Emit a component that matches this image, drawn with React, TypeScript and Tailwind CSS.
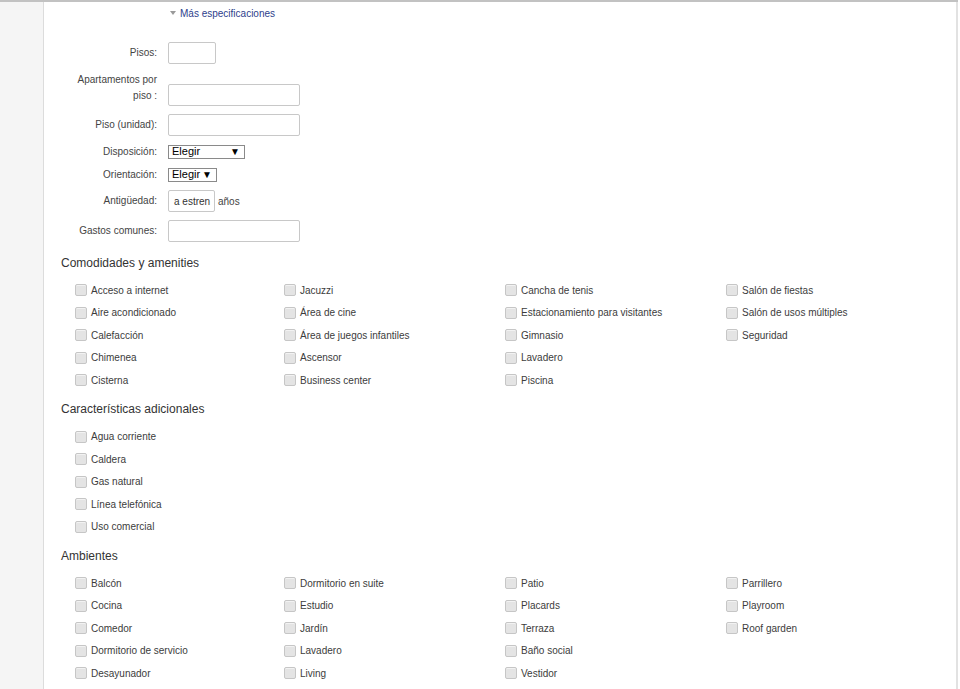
const amenities: string[][] = [
  ["Acceso a internet", "Aire acondicionado", "Calefacción", "Chimenea", "Cisterna"],
  ["Jacuzzi", "Área de cine", "Área de juegos infantiles", "Ascensor", "Business center"],
  ["Cancha de tenis", "Estacionamiento para visitantes", "Gimnasio", "Lavadero", "Piscina"],
  ["Salón de fiestas", "Salón de usos múltiples", "Seguridad"],
]

const extras: string[][] = [
  ["Agua corriente", "Caldera", "Gas natural", "Línea telefónica", "Uso comercial"],
]

const rooms: string[][] = [
  ["Balcón", "Cocina", "Comedor", "Dormitorio de servicio", "Desayunador"],
  ["Dormitorio en suite", "Estudio", "Jardín", "Lavadero", "Living"],
  ["Patio", "Placards", "Terraza", "Baño social", "Vestidor"],
  ["Parrillero", "Playroom", "Roof garden"],
]

function Check({ label }: { label: string }) {
  return (
    <label className="flex h-[22.5px] items-center gap-[4px] text-[10px] text-[#3c3c3c]">
      <span className="h-[12px] w-[12px] shrink-0 rounded-[2px] border border-[#c6c6c6] bg-[#e4e4e4] shadow-[inset_0_1px_0_#f2f2f2]" />
      <span>{label}</span>
    </label>
  )
}

function CheckGrid({ cols }: { cols: string[][] }) {
  return (
    <div className="ml-[14px] grid grid-cols-[209px_221px_221px_1fr]">
      {cols.map((col, i) => (
        <div key={i} className="flex flex-col">
          {col.map((item) => (
            <Check key={item} label={item} />
          ))}
        </div>
      ))}
    </div>
  )
}

function Row({ label, children, end, h }: { label: string; children: React.ReactNode; end?: boolean; h?: string }) {
  return (
    <div className={`flex gap-[11px] ${end ? "items-end" : "items-center"} ${h ?? ""}`}>
      <div className={`w-[82px] text-right text-[10px] leading-[16px] text-[#444] ${end ? "pb-[2px]" : ""}`}>
        {label}
      </div>
      {children}
    </div>
  )
}

function Field({ w, value }: { w: string; value?: string }) {
  return (
    <div className={`flex h-[22px] items-center overflow-hidden whitespace-nowrap rounded-[2px] border border-[#c8c8c8] bg-white px-[5px] text-[10px] text-[#333] ${w}`}>
      {value}
    </div>
  )
}

function Select({ w }: { w: string }) {
  return (
    <div className={`flex h-[14px] items-center justify-between border border-[#8a8a8a] bg-white pl-[3px] pr-[4px] text-[11px] leading-none text-black ${w}`}>
      <span>Elegir</span>
      <span className="text-[10px]">▼</span>
    </div>
  )
}

function App() {
  return (
    <div className="h-[689px] w-full overflow-hidden bg-white font-['Liberation_Sans',Arial,sans-serif]">
      <div className="flex h-full w-[958px] border-t-2 border-[#c2c2c2]">
        <div className="w-[44px] shrink-0 border-r border-[#dcdcdc] bg-[#f5f5f5]" />
        <div className="flex-1 border-r-2 border-[#e2e2e2] px-[17px]">
          <div className="ml-[109px] mt-[3px] flex h-[16px] items-center gap-[4px] text-[10px] text-[#2d3e8c]">
            <span className="h-0 w-0 border-x-[3.5px] border-t-[4px] border-x-transparent border-t-[#9a9a9a]" />
            <span>Más especificaciones</span>
          </div>

          <div className="ml-[14px] mt-[21px] flex flex-col gap-2">
            <Row label="Pisos:">
              <Field w="w-[48px]" />
            </Row>
            <Row label="Apartamentos por piso :" end>
              <Field w="w-[132px]" />
            </Row>
            <Row label="Piso (unidad):">
              <Field w="w-[132px]" />
            </Row>
            <Row label="Disposición:" h="h-[15px]">
              <Select w="w-[77px]" />
            </Row>
            <Row label="Orientación:" h="h-[15px]">
              <Select w="w-[49px]" />
            </Row>
            <Row label="Antigüedad:">
              <div className="flex items-center gap-[3px]">
                <Field w="w-[47px]" value="a estren" />
                <span className="text-[10px] text-[#444]">años</span>
              </div>
            </Row>
            <Row label="Gastos comunes:">
              <Field w="w-[132px]" />
            </Row>
          </div>

          <h3 className="mt-[13px] text-[12px] leading-[16px] text-[#333]">Comodidades y amenities</h3>
          <div className="mt-[8px]">
            <CheckGrid cols={amenities} />
          </div>

          <h3 className="mt-[9px] text-[12px] leading-[16px] text-[#333]">Características adicionales</h3>
          <div className="mt-[9px]">
            <CheckGrid cols={extras} />
          </div>

          <h3 className="mt-[10px] text-[12px] leading-[16px] text-[#333]">Ambientes</h3>
          <div className="mt-[8px]">
            <CheckGrid cols={rooms} />
          </div>
        </div>
      </div>
    </div>
  )
}

export default App
